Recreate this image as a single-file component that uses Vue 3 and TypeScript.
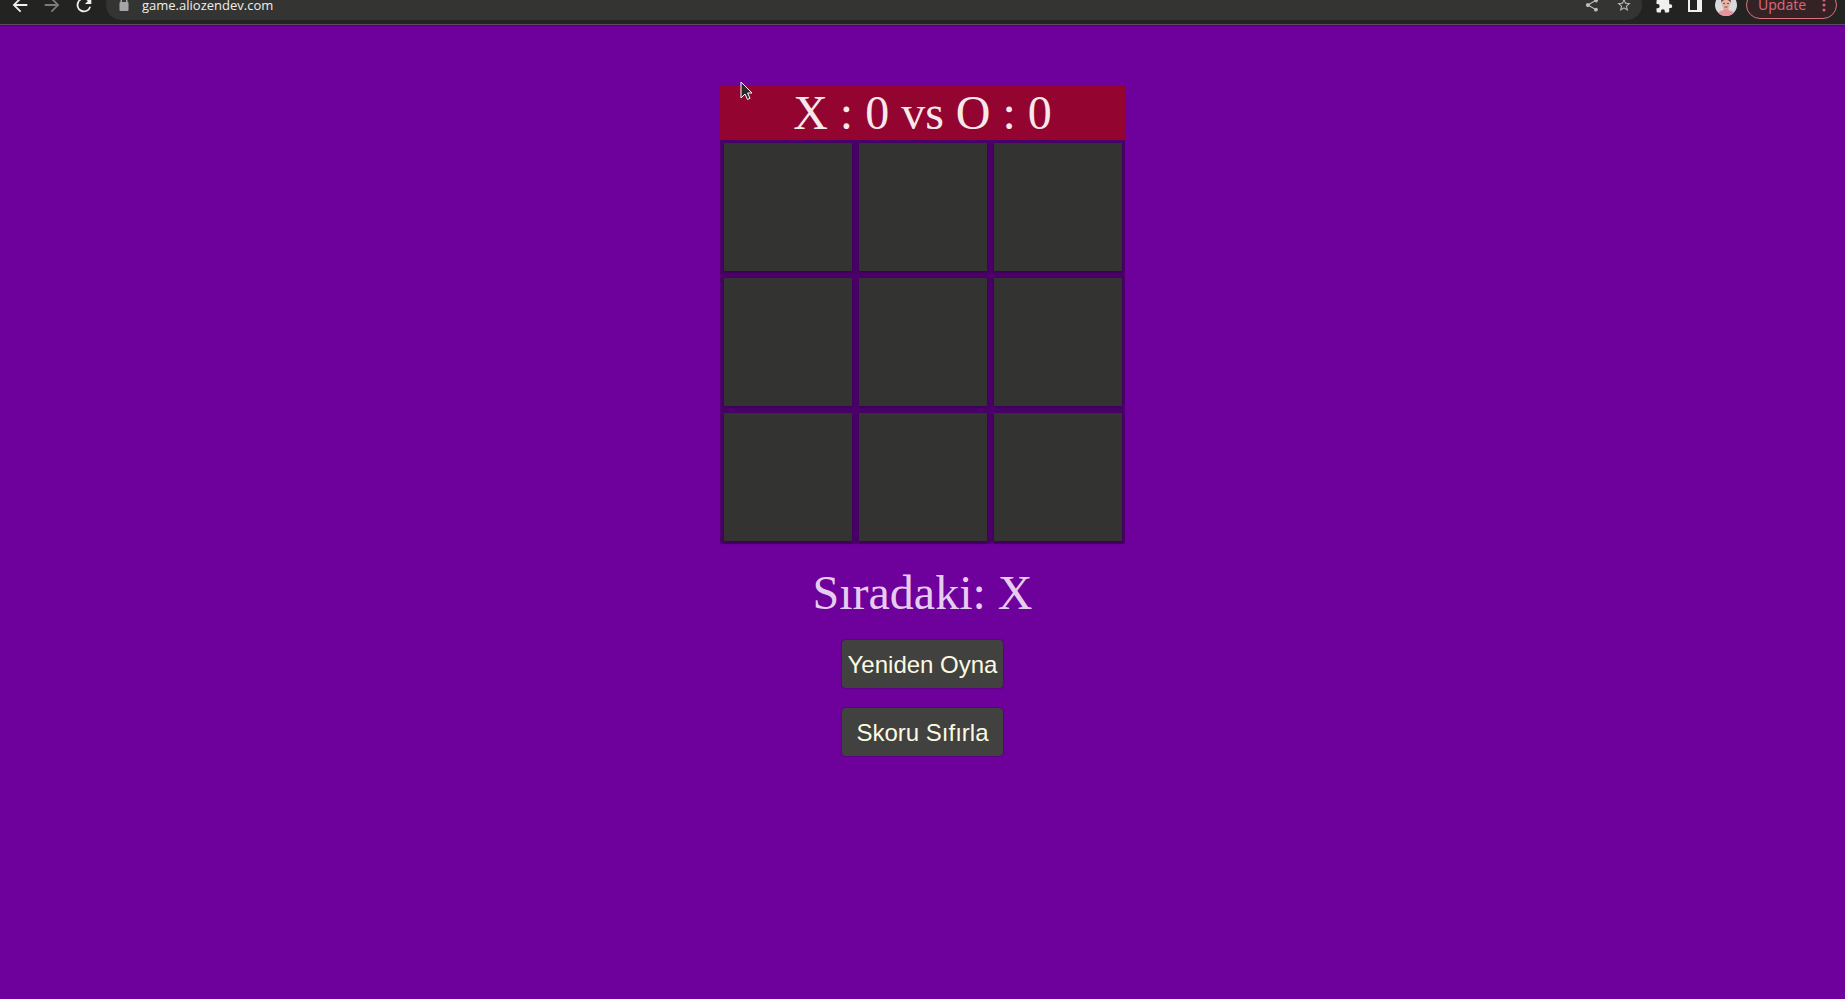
<script setup lang="ts">
import { computed, ref } from 'vue'

type Mark = 'X' | 'O'

const lines: number[][] = [
  [0, 1, 2], [3, 4, 5], [6, 7, 8],
  [0, 3, 6], [1, 4, 7], [2, 5, 8],
  [0, 4, 8], [2, 4, 6],
]

const address = ref('game.aliozendev.com')
const cells = ref<(Mark | '')[]>(Array(9).fill(''))
const next = ref<Mark>('X')
const score = ref<Record<Mark, number>>({ X: 0, O: 0 })

const winner = computed(() => {
  const line = lines.find(([a, b, c]) =>
    cells.value[a] !== '' && cells.value[a] === cells.value[b] && cells.value[a] === cells.value[c])
  return line ? cells.value[line[0]] : ''
})

function play(index: number) {
  if (cells.value[index] || winner.value) return
  cells.value[index] = next.value
  if (winner.value) score.value[next.value]++
  next.value = next.value === 'X' ? 'O' : 'X'
}

function restart() {
  cells.value = Array(9).fill('')
  next.value = 'X'
}

function resetScore() {
  score.value = { X: 0, O: 0 }
}
</script>

<template>
  <div class="window">
    <header class="toolbar">
      <div class="toolbar-row">
        <nav class="nav">
          <button class="icon" aria-label="Back">
            <svg viewBox="0 0 24 24"><path d="M20 11H7.8l5.6-5.6L12 4l-8 8 8 8 1.4-1.4L7.8 13H20z" /></svg>
          </button>
          <button class="icon muted" aria-label="Forward">
            <svg viewBox="0 0 24 24"><path d="M4 11h12.2l-5.6-5.6L12 4l8 8-8 8-1.4-1.4 5.6-5.6H4z" /></svg>
          </button>
          <button class="icon" aria-label="Reload">
            <svg viewBox="0 0 24 24"><path d="M17.65 6.35A8 8 0 1 0 19.73 14h-2.08A6 6 0 1 1 12 6c1.66 0 3.14.69 4.22 1.78L13 11h7V4z" /></svg>
          </button>
        </nav>
        <div class="address">
          <svg class="lock" viewBox="0 0 16 16"><path d="M11.500 6V4.500a3.500 3.500 0 0 0-7 0V6a1 1 0 0 0-1 1v7a1 1 0 0 0 1 1h7a1 1 0 0 0 1-1V7a1 1 0 0 0-1-1zM6 4.500a2 2 0 0 1 4 0V6H6z" /></svg>
          <input v-model="address" class="url" type="text" aria-label="Address">
          <button class="icon small" aria-label="Share">
            <svg viewBox="0 0 24 24"><path d="M18 16.1c-.8 0-1.4.3-2 .8l-7.1-4.2a3 3 0 0 0 0-1.4L16 7.2A3 3 0 1 0 15 5c0 .2 0 .5.1.7L8 9.8a3 3 0 1 0 0 4.4l7.1 4.2a2.9 2.9 0 1 0 2.9-2.3z" /></svg>
          </button>
          <button class="icon small" aria-label="Bookmark">
            <svg viewBox="0 0 24 24"><path d="m22 9.2-7.2-.6L12 2 9.2 8.6 2 9.2 7.5 14l-1.7 7 6.2-3.7 6.2 3.7-1.7-7zm-10 6.2-3.8 2.3 1-4.3-3.3-2.9 4.4-.4L12 6.1l1.7 4 4.4.4-3.3 2.9 1 4.3z" /></svg>
          </button>
        </div>
        <div class="actions">
          <button class="icon small light" aria-label="Extensions">
            <svg viewBox="0 0 24 24"><path d="M20.5 11H19V7a2 2 0 0 0-2-2h-4V3.5a2.5 2.5 0 0 0-5 0V5H4a2 2 0 0 0-2 2v3.8h1.5a2.7 2.7 0 0 1 0 5.4H2V20a2 2 0 0 0 2 2h3.8v-1.5a2.7 2.7 0 0 1 5.4 0V22H17a2 2 0 0 0 2-2v-4h1.5a2.5 2.5 0 0 0 0-5z" /></svg>
          </button>
          <button class="icon small light" aria-label="Side panel">
            <svg viewBox="0 0 18 18"><path d="M2 2h14v14H2zm2 2v10h7V4z" fill-rule="evenodd" /></svg>
          </button>
          <button class="icon" aria-label="Profile">
            <svg viewBox="0 0 22 22">
              <defs><clipPath id="avatar"><circle cx="11" cy="11" r="11" /></clipPath></defs>
              <g clip-path="url(#avatar)">
                <rect width="22" height="22" fill="#d9dadb" />
                <path d="M2 22c0-4 4-6 9-6s9 2 9 6z" fill="#e7929f" />
                <path d="M8.5 13h5v4.5L11 19l-2.500-1.500z" fill="#d99c92" />
                <ellipse cx="11" cy="9.5" rx="4.200" ry="5.500" fill="#e6b0a5" />
                <path d="M6.500 9c-.8-5 1-7 4.500-7s5.300 2 4.500 7c-.8-3-2-3-4.500-3S7.300 6 6.500 9z" fill="#3d2827" />
                <path d="M8 9.500h2m2 0h2M9.500 13h3" stroke="#7b4545" fill="none" />
              </g>
            </svg>
          </button>
          <button class="update">
            Update
            <svg class="dots" viewBox="0 0 4 16"><circle cx="2" cy="3" r="1.5" /><circle cx="2" cy="8" r="1.5" /><circle cx="2" cy="13" r="1.5" /></svg>
          </button>
        </div>
      </div>
    </header>

    <main class="page">
      <section class="game">
        <h1 class="score">X : {{ score.X }} vs O : {{ score.O }}</h1>
        <div class="board">
          <button
            v-for="(mark, index) in cells"
            :key="index"
            class="cell"
            :aria-label="`${index + 1} ${mark}`"
            @click="play(index)"
          >{{ mark }}</button>
        </div>
      </section>
      <p class="turn">Sıradaki: {{ next }}</p>
      <div class="controls">
        <button class="control" @click="restart">Yeniden Oyna</button>
        <button class="control" @click="resetScore">Skoru Sıfırla</button>
      </div>
    </main>

    <svg class="pointer" viewBox="0 0 13 20"><path d="M1 1v16l4-4 2.500 5.500 2.500-1.200L7.600 12H12z" fill="#292929" stroke="#fff" stroke-width="1" /></svg>
  </div>
</template>

<style>
body {
  margin: 0;
  background: #6e009c;
}
</style>

<style scoped>
.window {
  position: relative;
  min-height: 100vh;
  display: flex;
  flex-direction: column;
  background: #6e009c;
}

button {
  font: inherit;
  border: 0;
  margin: 0;
  padding: 0;
  cursor: default;
}

.toolbar {
  height: 24px;
  overflow: hidden;
  background: #232321;
  border-bottom: 1px solid #5b4863;
  box-shadow: 0 1px 1px #52007a;
  font-family: "Noto Sans", sans-serif;
}

.toolbar-row {
  display: flex;
  align-items: center;
  height: 30px;
  margin-top: -10px;
  padding: 0 8px 0 9px;
}

.nav {
  display: flex;
  gap: 10px;
  margin-right: 11px;
}

.icon {
  display: flex;
  align-items: center;
  justify-content: center;
  width: 22px;
  height: 22px;
  background: none;
  color: #f0f1ee;
}

.icon svg {
  width: 22px;
  height: 22px;
  fill: currentColor;
}

.icon.muted {
  color: #7c7c79;
}

.icon.small {
  color: #bcbdbb;
}

.icon.small svg {
  width: 16px;
  height: 16px;
}

.icon.small.light {
  color: #f0f1ee;
}

.icon.small.light svg {
  width: 18px;
  height: 18px;
}

.address {
  flex: 1;
  display: flex;
  align-items: center;
  gap: 10px;
  height: 30px;
  padding: 0 7px 0 10px;
  box-sizing: border-box;
  border-radius: 15px;
  background: #343432;
}

.lock {
  width: 16px;
  height: 16px;
  margin-bottom: 2px;
  fill: #a3a5a7;
}

.url {
  flex: 1;
  min-width: 0;
  height: 24px;
  padding: 0;
  border: 0;
  outline: 0;
  background: none;
  color: #eeefec;
  font: 13px/24px "Open Sans", sans-serif;
}

.actions {
  display: flex;
  align-items: center;
  gap: 9px;
  margin-left: 11px;
}

.update {
  display: flex;
  align-items: center;
  justify-content: space-between;
  width: 91px;
  height: 28px;
  padding: 0 10px 0 11px;
  box-sizing: border-box;
  border: 1px solid #dc7282;
  border-radius: 14px;
  background: #352225;
  color: #d5667a;
  font-size: 14px;
  line-height: 16px;
}

.dots {
  width: 4px;
  height: 16px;
  fill: currentColor;
}

.page {
  flex: 1;
  display: flex;
  flex-direction: column;
  align-items: center;
  padding-top: 61px;
  font-family: "Liberation Serif", serif;
}

.score {
  margin: 0;
  background: #930431;
  color: #f7e8ea;
  font-size: 48px;
  font-weight: 400;
  line-height: 54px;
  text-align: center;
}

.board {
  display: grid;
  grid-template-columns: repeat(3, 128px);
  gap: 7px;
  padding: 3px 3px 3px 4px;
  background: #4b0069;
}

.cell {
  height: 128px;
  background: #333331;
  box-shadow: 0 1px 3px #36004e;
  color: #f7e8ea;
  font-size: 96px;
  line-height: 128px;
}

.turn {
  margin: 20px 0 18px;
  color: #e6cdef;
  font-size: 48px;
  line-height: 58px;
}

.controls {
  display: flex;
  flex-direction: column;
  gap: 20px;
}

.control {
  height: 48px;
  padding: 2px 6px 0;
  border-radius: 4px;
  background: #41413f;
  box-shadow: 0 0 2px #36004e;
  color: #fbfbe2;
  font: 24px "Liberation Sans", sans-serif;
}

.pointer {
  position: absolute;
  left: 740px;
  top: 81px;
  width: 13px;
  height: 20px;
  pointer-events: none;
}
</style>
